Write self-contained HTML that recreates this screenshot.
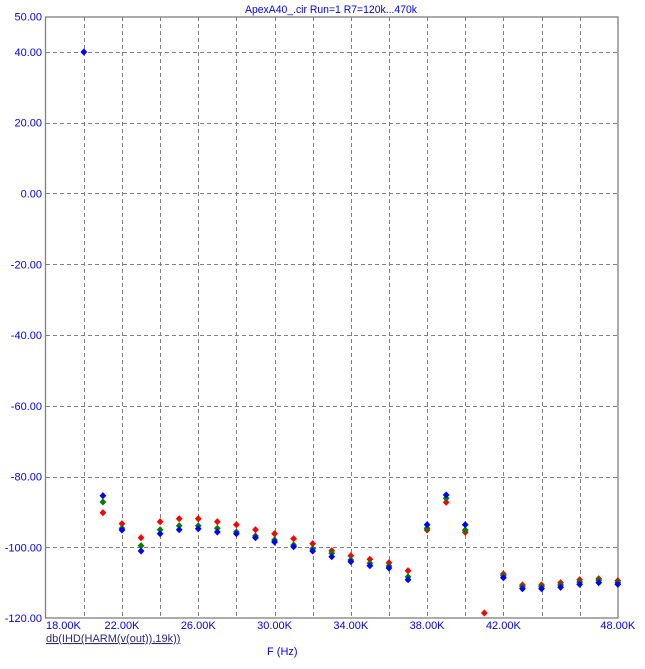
<!DOCTYPE html>
<html><head><meta charset="utf-8"><style>
html,body{margin:0;padding:0;background:#fff;}
svg{display:block;font-family:"Liberation Sans",Arial,sans-serif;}
</style></head><body>
<svg width="645" height="669" viewBox="0 0 645 669" xmlns="http://www.w3.org/2000/svg">
<rect width="645" height="669" fill="#fff"/>
<text x="245" y="13" font-size="11" fill="#0000ff" textLength="172" lengthAdjust="spacingAndGlyphs">ApexA40_.cir Run=1 R7=120k...470k</text>
<g id="grid" stroke="#808080" stroke-width="1" stroke-dasharray="4,3" fill="none"></g>
<rect x="45.5" y="17" width="572.5" height="601" fill="none" stroke="#808080" stroke-width="1.3"/>
<g id="ylab" font-size="11" fill="#0000ff" text-anchor="end"></g>
<g id="xlab" font-size="11" fill="#0000ff"></g>
<g id="pts"></g>
<text x="46" y="642" font-size="11" fill="#2a2a80" text-decoration="underline">db(IHD(HARM(v(out)),19k))</text>
<text x="267" y="655" font-size="11" fill="#0000ff">F (Hz)</text>
</svg>
<script>
var NS="http://www.w3.org/2000/svg";
function X(k){return 45.7+(k-18)*19.07;}
function Y(v){return 16.6+(50-v)*3.538;}
function el(p,t,a,txt){var e=document.createElementNS(NS,t);for(var k in a)e.setAttribute(k,a[k]);if(txt)e.textContent=txt;document.getElementById(p).appendChild(e);}
for(var k=20;k<=46;k+=2){var x=Math.round(X(k))+0.5;el("grid","line",{x1:x,y1:17,x2:x,y2:618});}
[40,20,0,-20,-40,-60,-80,-100].forEach(function(v){var y=Math.round(Y(v))+0.5;el("grid","line",{x1:46,y1:y,x2:618,y2:y});});
[50,40,20,0,-20,-40,-60,-80,-100,-120].forEach(function(v){el("ylab","text",{x:42,y:Y(v)+4},v.toFixed(2));});
[[18,"start",46],[22,"middle"],[26,"middle"],[30,"middle"],[34,"middle"],[38,"middle"],[42,"middle"],[48,"middle"]].forEach(function(a){el("xlab","text",{x:a[2]||X(a[0]),y:629,"text-anchor":a[1]},a[0].toFixed(2)+"K");});
var d=[[21,512.7,502,495.7],[22,523.7,528.3,530],[23,537.7,545.7,551],[24,521.7,529.7,533.7],[25,518.7,525.7,529.7],[26,518.7,525.7,528.7],[27,521.7,528.3,532],[28,524.7,532,533.7],[29,529.7,536,537.7],[30,533.7,540,542],[31,538.7,545,546.7],[32,543.7,548.7,551],[33,550.7,553.3,556.7],[34,555.7,560,561.7],[35,559.3,563.3,565.7],[36,562.7,566,568],[37,570.7,576.7,579.7],[38,530,528.3,524.7],[39,502.3,498.3,495],[40,532.3,530,524.7],[42,574,575.7,577.7],[43,585,586.7,588.7],[44,585,586.7,588.7],[45,582.7,585,587.3],[46,579.7,582,584.3],[47,578.7,580.3,582.7],[48,580.7,582.5,584.3]];
function dia(x,y,c){el("pts","path",{d:"M"+x+" "+(y-3.6)+"L"+(x+3.4)+" "+y+"L"+x+" "+(y+3.6)+"L"+(x-3.4)+" "+y+"Z",fill:c});}
var cols=["#ff0000","#008000","#0000ff"];
d.forEach(function(r){var x=X(r[0]);for(var i=0;i<3;i++)dia(x,r[i+1],cols[i]);});
dia(X(41),613,"#ff0000");
dia(X(20),Y(40),"#0000ff");
</script>
</body></html>
